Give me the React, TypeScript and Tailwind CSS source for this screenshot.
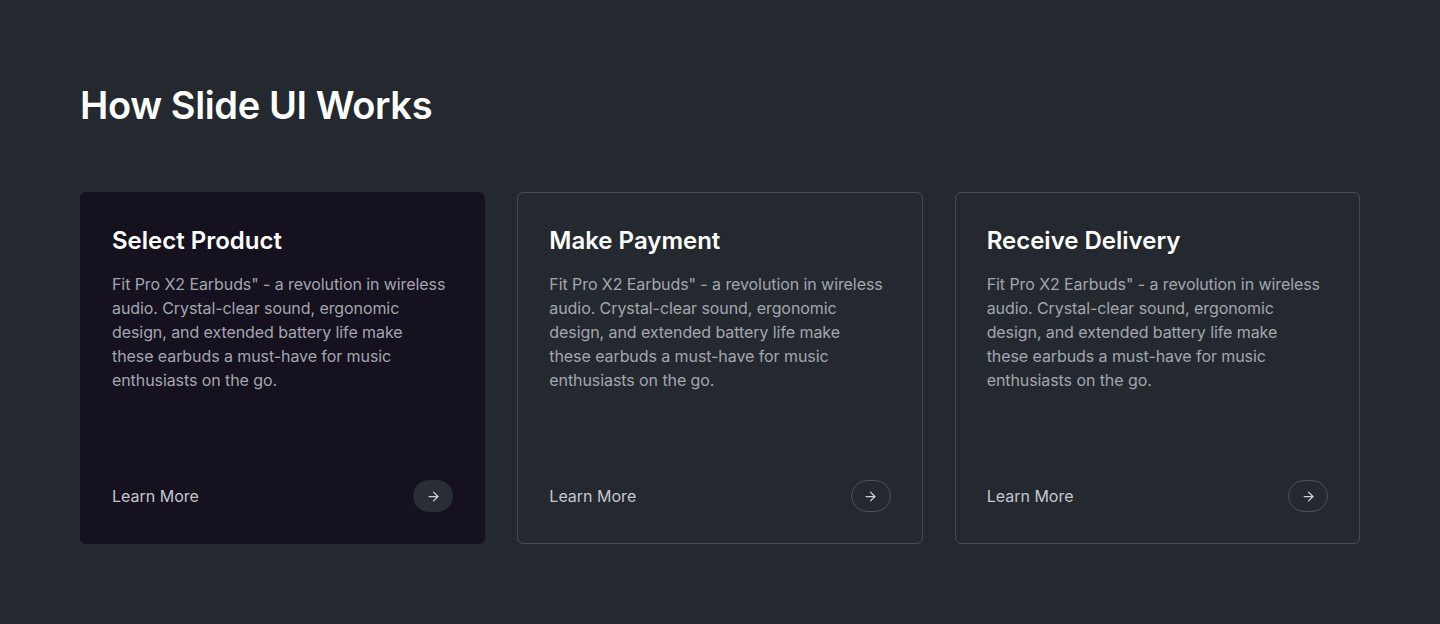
import { ArrowRight } from 'lucide-react'

const steps = [
  { title: 'Select Product', active: true },
  { title: 'Make Payment', active: false },
  { title: 'Receive Delivery', active: false },
]

const body =
  'Fit Pro X2 Earbuds" - a revolution in wireless audio. Crystal-clear sound, ergonomic design, and extended battery life make these earbuds a must-have for music enthusiasts on the go.'

function StepCard({ title, active }: { title: string; active: boolean }) {
  return (
    <div
      className={
        active
          ? 'flex h-[352px] flex-col rounded-md border border-[#15111f] bg-[#15111f] px-[31px] pt-[32px] pb-[31px]'
          : 'flex h-[352px] flex-col rounded-md border border-[#464b53] px-[31px] pt-[32px] pb-[31px]'
      }
    >
      <h3 className="text-2xl leading-8 font-semibold text-white">{title}</h3>
      <p className="mt-[15px] max-w-[334px] text-base leading-6 tracking-[-0.005em] text-[#a3a6ad]">
        {body}
      </p>
      <div className="mt-auto flex items-center justify-between">
        <a href="#" className="text-base leading-6 text-[#c4c6cb]">
          Learn More
        </a>
        <button
          className={
            active
              ? 'flex h-8 w-10 items-center justify-center rounded-full bg-[#2a2d35] text-[#d0d2d6]'
              : 'flex h-8 w-10 items-center justify-center rounded-full border border-[#4d525a] text-[#d0d2d6]'
          }
        >
          <ArrowRight size={15} strokeWidth={2} />
        </button>
      </div>
    </div>
  )
}

export default function App() {
  return (
    <div
      className="min-h-screen bg-[#242930] px-20 pt-[82px] pb-20"
      style={{ fontFamily: 'Inter, "Noto Sans", sans-serif' }}
    >
      <h1 className="text-[38px] leading-[46px] font-semibold tracking-[-0.01em] text-white">
        How Slide UI Works
      </h1>
      <div className="mt-[64px] grid grid-cols-3 gap-8">
        {steps.map((s) => (
          <StepCard key={s.title} {...s} />
        ))}
      </div>
    </div>
  )
}
